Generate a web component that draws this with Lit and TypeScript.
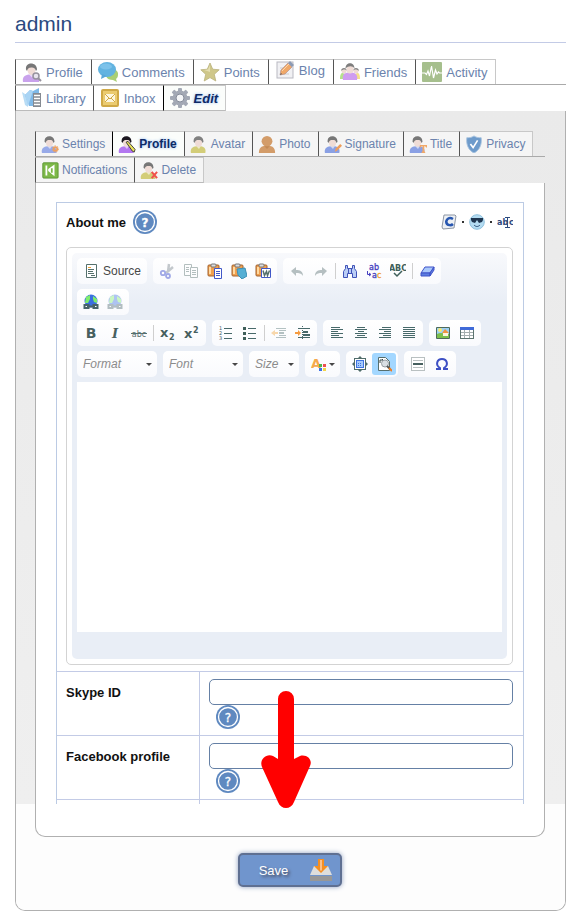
import { LitElement, html, svg, css, nothing } from "lit";
import { customElement } from "lit/decorators.js";
import { classMap } from "lit/directives/class-map.js";

const person = (hair: string, body: string, extra: unknown = nothing) => svg`
  <path d="M1 20c-1-5 2-7 6-7.500h5c4 .5 6 3 5 7.500z" fill="${body}"/>
  <path d="M7 12.500l3 3 2-3z" fill="#fff" opacity=".6"/>
  <ellipse cx="9.500" cy="8" rx="4" ry="5" fill="#f0dcd6"/>
  <path d="M4 7.500C3-.5 15-.5 15 7.500l-1 1.500c-1-3-2-3.500-4-3.500-3 0-4 .5-5 3.500z" fill="${hair}"/>
  ${extra}`;

const paste = (extra: unknown) => svg`
  <rect x="1" y="2" width="11" height="11" rx="1" fill="#f0a050" stroke="#a0602c"/>
  <path d="M3 4v7" stroke="#ffd9a0" stroke-width="2"/>
  <rect x="4" y="1" width="5" height="3" rx="1" fill="#ddd" stroke="#777"/>${extra}`;

const globe = svg`
  <circle cx="8" cy="7" r="6.500" fill="#3a6fe0"/>
  <path d="M3 3l4-2v4l-2 4H2zM10 2l4 3v4l-3-1-1-3z" fill="#7fee6a"/>
  <path d="M1.500 11h4v3h-4zM10.500 11h4v3h-4z" fill="#fff" stroke="#47636a" stroke-width="2"/>
  <path d="M4 12.500h8" stroke="#47636a" stroke-width="2"/>`;

const lines = (d: string) => svg`<path d="${d}" stroke="#47696a" stroke-width="1" shape-rendering="crispEdges"/>`;

const icons: Record<string, unknown> = {
  profile: person("#777", "#c9a2ec", svg`<circle cx="14" cy="14" r="3" fill="#e8e4ee" stroke="#96929e" stroke-width="1.500"/><path d="M16 16l3 3" stroke="#96929e" stroke-width="2"/>`),
  comments: svg`<path d="M11 8c5-3 10 1 9 5 0 2-1 3-2 4l1 3-4-2c-3 0-6-1-7-4z" fill="#a9cf74"/><ellipse cx="9" cy="7.500" rx="9" ry="7.500" fill="#62b3e0"/><path d="M4 12l-1 5 6-3z" fill="#5aa8d8"/><ellipse cx="8" cy="4.500" rx="6" ry="3" fill="#7cc2ea"/>`,
  points: svg`<path d="M10 1l2.700 6.200 6.500.6-4.900 4.500 1.500 6.700L10 15.600 4.200 19l1.500-6.700L.8 7.800l6.500-.6z" fill="#cfc78a" stroke="#b9b17c" stroke-width=".8"/><path d="M10 3v7l-6-2 4-.5z" fill="#e4deb0"/>`,
  blog: svg`<rect x="2" y="2" width="16" height="16" fill="#f1f1f4" stroke="#b9b9c2"/><path d="M5 11h3M5 14h9M5 8h3" stroke="#ccc"/><path d="M5 15l1-5 7-7 4 4-7 7z" fill="#f0a868" stroke="#a88" stroke-width=".6"/><path d="M7 11l7-7" stroke="#fbd6ae"/><path d="M13 3l4 4 2-2-4-4z" fill="#8b9bb5"/><path d="M5 15l1-2 1 1z" fill="#555"/>`,
  friends: svg`<path d="M0 17c0-6 2-7 5-5l2 5z" fill="#b6e08c"/><path d="M20 17c0-6-2-7-5-5l-2 5z" fill="#f5e08a"/><circle cx="4" cy="9" r="2.500" fill="#eedad4"/><circle cx="16" cy="9" r="2.500" fill="#eedad4"/><path d="M1 9c0-4 6-4 6 0-1-2-4-2-6 0zM13 9c0-4 6-4 6 0-2-2-5-2-6 0z" fill="#858585"/><path d="M3 18c-1-5 1-7 5-7.500h4c4 .5 6 3 5 7.500z" fill="#cf9df0"/><ellipse cx="10" cy="7" rx="3.500" ry="4.500" fill="#f0dcd6"/><path d="M5.500 6.500c0-7 9-7 9 0-2-3-6-3-9 0z" fill="#7d7d7d"/>`,
  activity: svg`<rect width="20" height="20" rx="1" fill="#a6bf8d"/><path d="M0 11h3l1.500 1.500L6 9l1.500 5L9.500 4l2 12 2-8 1.500 4 1.500-2 1 1H20" fill="none" stroke="#fff" stroke-width="1.200"/>`,
  library: svg`<path d="M0 4l6 4v11L3 17z" fill="#b8dcf5"/><path d="M3 7l5-5 3 1 6-3v18H7z" fill="#7fb9e8"/><path d="M3 7l5-5 3 1-5 15z" fill="#a9d4f4"/><rect x="11" y="5" width="8" height="14" fill="#858a92"/><path d="M12 7.500h6M12 10.500h6M12 13.500h6M12 16.500h6" stroke="#fff" stroke-width="1.500"/>`,
  inbox: svg`<rect x="2" y="2" width="16" height="16" rx="1" fill="#ebcb70" stroke="#d0a946" stroke-width="2"/><rect x="5" y="6" width="10" height="8" fill="#fdf6df"/><path d="M5 6l5 5 5-5M5 14l4-4M15 14l-4-4" fill="none" stroke="#d0a946"/>`,
  edit: svg`<g fill="#a3a9b5"><rect x="8" width="4" height="20" rx="1"/><rect y="8" width="20" height="4" rx="1"/><rect x="8" width="4" height="20" rx="1" transform="rotate(45 10 10)"/><rect x="8" width="4" height="20" rx="1" transform="rotate(135 10 10)"/><circle cx="10" cy="10" r="7.500"/></g><circle cx="10" cy="10" r="4" fill="#f4f6f8" stroke="#858c9a"/>`,
  settings: person("#777", "#98aae8", svg`<circle cx="16" cy="15.500" r="2" fill="none" stroke="#eda060" stroke-width="2"/><circle cx="16" cy="15.500" r="3.500" fill="none" stroke="#eda060" stroke-dasharray="1.500 1.500"/>`),
  subprofile: person("#1c1720", "#b377f0", svg`<path d="M9 8l2-1 8 9-1 3-2-1z" fill="#e6e05a" stroke="#333"/>`),
  avatar: person("#808080", "#d3cd78"),
  photo: svg`<path d="M1 20c0-5 2-7 6-8h6c4 1 6 3 6 8z" fill="#d39c69"/><ellipse cx="10" cy="7" rx="6" ry="6" fill="#d39c69"/><path d="M7 12.500h6l-3 3z" fill="#c38a56"/>`,
  signature: person("#777", "#8aa0e4", svg`<path d="M12 19l1-4 5-5 2 2-5 5z" fill="#ee9d5c"/>`),
  title: person("#777", "#8aa0e4", svg`<path d="M12 11h8v3h-1l-1-1.500h-1V18l1 1v1h-4v-1l1-1v-5.500h-1L13 14h-1z" fill="#f0a868"/>`),
  privacy: svg`<path d="M10 1c3 2 5 2 8 2 1 8-2 14-8 17C4 17 1 11 2 3c3 0 5 0 8-2z" fill="#6e9bcb" stroke="#a9c4e0"/><path d="M6 10l3 4 5-8" fill="none" stroke="#fff" stroke-width="1.800"/>`,
  notifications: svg`<rect x="2" y="2" width="17" height="17" rx="1" fill="#7db848" stroke="#5a9432"/><path d="M5 5h2v11H5zM8 9l7-5v13l-7-6z" fill="#fff"/><path d="M11 8h2v5h-2z" fill="#7db848"/>`,
  remove: person("#777", "#d3cd78", svg`<path d="M13 12l6 7M19 12l-6 7" stroke="#f0524c" stroke-width="2.200"/>`),

  source: svg`<path d="M3.500 1.500h10v13h-10z" fill="#fff" stroke="#55706c"/><path d="M5 4.500h3" stroke="#f0a030"/><path d="M5 6.500h6M5 8.500h5M5 10.500h6M8 12.500h4" stroke="#55706c"/>`,
  cut: svg`<g opacity=".5"><path d="M10 1l-1 8M14 4L7 10" stroke="#8a949c" stroke-width="2.500"/><circle cx="4" cy="10" r="2.200" fill="#fff" stroke="#4858d0" stroke-width="1.800"/><circle cx="9" cy="13" r="2" fill="#fff" stroke="#4858d0" stroke-width="1.800"/></g>`,
  copy: svg`<g opacity=".4" stroke="#46625f"><path d="M1.500 1.500h7v11h-7z" fill="#fff"/><path d="M3 4.500h3M3 6.500h3M3 8.500h3"/><path d="M7.500 4.500h7v10h-7z" fill="#fff"/><path d="M9 7.500h4M9 9.500h4M9 11.500h4"/></g>`,
  paste: paste(svg`<path d="M7.500 5.500h7v10h-7z" fill="#fff" stroke="#4158c8"/><path d="M9 8.500h4M9 10.500h4M9 12.500h4" stroke="#4158c8"/>`),
  pasteText: paste(svg`<path d="M6 6l8-1 2 8-5 3-4-4z" fill="#55afd4" stroke="#3c8fb4"/>`),
  pasteWord: paste(svg`<path d="M6.500 5.500h9v9h-9z" fill="#fff" stroke="#4158c8"/><path d="M8 7.500l1.500 5 2-4 1 4 2-5" fill="none" stroke="#55706c" stroke-width="1.500"/>`),
  undo: svg`<path d="M2 8l5-4v3c4 0 7 1 7 6-2-3-4-3-7-3v3z" fill="#b5bfc1"/>`,
  redo: svg`<path d="M14 8L9 4v3c-4 0-7 1-7 6 2-3 4-3 7-3v3z" fill="#b5bfc1"/>`,
  find: svg`<path d="M3.500 2.500h2v3h5v-3h2v3l2 3v6h-4v-4h-5v4h-4v-6l2-3z" fill="#b9cdf6" stroke="#3f52b8"/><path d="M6.500 5v6M9.500 5v6" stroke="#3f52b8"/>`,
  replace: svg`<g font-family="DejaVu Sans" font-size="8" fill="#453fc0" stroke="#453fc0" stroke-width=".3"><text x="3" y="7">ab</text><text x="6" y="15">a<tspan fill="#f0a030" stroke="#f0a030">c</tspan></text></g><path d="M1.500 8v3.500h3M3 10l2 1.500L3 13" fill="none" stroke="#453fc0"/>`,
  spell: svg`<text x="8" y="8" text-anchor="middle" font-family="DejaVu Sans" font-weight="bold" font-size="8" fill="#3f5f5a">ABC</text><path d="M4 10l3 3 5-5" fill="none" stroke="#3f5f5a" stroke-width="1.500"/>`,
  eraser: svg`<path d="M6 4h9l-4 6H2z" fill="#a9c8fb" stroke="#3f52c8"/><path d="M2 10h9v3H2zM11 10l4-6v3l-4 6z" fill="#5c7ee0" stroke="#3f52c8"/>`,
  link: globe,
  unlink: svg`<g opacity=".4">${globe}</g>`,
  bold: svg`<text x="8" y="13" text-anchor="middle" font-family="DejaVu Sans" font-weight="bold" font-size="14" fill="#47605f">B</text>`,
  italic: svg`<text x="8" y="13" text-anchor="middle" font-family="DejaVu Serif" font-style="italic" font-weight="bold" font-size="13" fill="#47605f">I</text>`,
  strike: svg`<text x="8" y="12" text-anchor="middle" font-family="DejaVu Sans" font-size="8" fill="#566f6e">abc</text><path d="M0 8.500h16" stroke="#566f6e"/>`,
  sub: svg`<g font-family="DejaVu Sans" font-weight="bold" fill="#47605f"><text x="0" y="12" font-size="13">x</text><text x="9" y="15" font-size="8">2</text></g>`,
  sup: svg`<g font-family="DejaVu Sans" font-weight="bold" fill="#47605f"><text x="0" y="13" font-size="13">x</text><text x="9" y="8" font-size="8">2</text></g>`,
  numbered: svg`<g font-family="DejaVu Sans" font-size="5" fill="#47605f"><text x="1" y="5">1</text><text x="1" y="10">2</text><text x="1" y="15">3</text></g>${lines("M6 3.500h8M6 8.500h8M6 13.500h8")}`,
  bullets: svg`<path d="M1 2h3v3H1zM1 7h3v3H1zM1 12h3v3H1z" fill="#3f5f5a"/>${lines("M6 3.500h8M6 8.500h8M6 13.500h8")}`,
  outdent: svg`<g opacity=".4">${lines("M5 3.500h10M8 5.500h7M8 7.500h5M8 8.500h5M8 10.500h7M5 12.500h10")}<path d="M0 8l4-3v2h3v2H4v2z" fill="#f0a030"/></g>`,
  indent: svg`${lines("M3 3.500h12M8 6.500h5M8 7.500h5M8 9.500h7M8 10.500h7M3 12.500h12")}<path d="M6 8L3 5v2H0v2h3v2z" fill="#f59b40"/><path d="M7.500 1v14" stroke="#47696a" stroke-dasharray="1 1"/>`,
  left: lines("M2 2.500h9M2 4.500h12M2 6.500h7M2 8.500h12M2 10.500h8M2 12.500h12"),
  center: lines("M4 2.500h8M2 4.500h12M5 6.500h6M2 8.500h12M4 10.500h8M2 12.500h12"),
  right: lines("M5 2.500h9M2 4.500h12M7 6.500h7M2 8.500h12M6 10.500h8M2 12.500h12"),
  justify: lines("M2 2.500h12M2 4.500h12M2 6.500h12M2 8.500h12M2 10.500h12M2 12.500h12"),
  image: svg`<path d="M1.500 2.500h13v11h-13z" fill="#9bd0f5" stroke="#4e6a5a"/><path d="M2 9c4-2 8 0 12 0v4H2z" fill="#7cbf4b"/><circle cx="5" cy="5" r="2" fill="#f7ea70"/><path d="M8 8h5v3H8z" fill="#fff3dc"/><path d="M7 8l3-4 4 4z" fill="#ef9440"/>`,
  table: svg`<g shape-rendering="crispEdges"><path d="M1.500 2.500h13v11h-13z" fill="#fff" stroke="#5c7470"/><path d="M1 2h14v3H1z" fill="#3f6ad8"/><path d="M5.500 5v8M10.500 5v8M2 7.500h12M2 10.500h12" stroke="#a5afb0"/></g>`,
  color: svg`<text x="0" y="12" font-family="DejaVu Sans" font-weight="bold" font-size="13" fill="#f5a94c">A</text><path d="M8 8h3v3H8z" fill="#50b84a"/><path d="M12 8h3v3h-3z" fill="#ee5050"/><path d="M8 12h3v3H8z" fill="#3b70e8"/><path d="M12 12h3v3h-3z" fill="#f3d548"/>`,
  maximize: svg`<path d="M8 0l3 3H5zM8 16l3-3H5zM0 8l3-3v6zM16 8l-3-3v6z" fill="#506c6a"/><rect x="2.500" y="2.500" width="11" height="11" fill="#fff" stroke="#506c6a"/><rect x="4.500" y="4.500" width="7" height="7" fill="#a5cafc" stroke="#3f74e0"/><path d="M6 7.500h4M6 9.500h4" stroke="#3f74e0" stroke-dasharray="1 1"/>`,
  preview: svg`<path d="M2.500 1.500h7l4 4v9h-11z" fill="#fff" stroke="#566f6e"/><path d="M4 7V4h3v1M6 3l2 2-2 2" fill="none" stroke="#2f4545"/><circle cx="9" cy="7.500" r="3.500" fill="#d9dfe4" stroke="#969da3"/><path d="M11 10l3 3" stroke="#555" stroke-width="2"/><path d="M13 12l3 3" stroke="#ee7c20" stroke-width="2"/>`,
  rule: svg`<g shape-rendering="crispEdges" stroke="#b9c0c1"><path d="M1.500 1.500h13v13h-13z" fill="#fff"/><path d="M3 4.500h10M3 11.500h10"/><path d="M3 8h10" stroke="#47605f" stroke-width="2"/></g>`,
  omega: svg`<path d="M2 13h4v-1C1 9 3 3 8 3s7 6 2 9v1h4" fill="none" stroke="#3d4fc4" stroke-width="2"/>`,

  comcode: svg`<path d="M3 1h11l1 1-2 12-11 1L1 13z" fill="#edf0f4" stroke="#8d96a4"/><path d="M12 5c-5-3-8 2-6 5 1 1 4 2 6 0" fill="none" stroke="#2857b0" stroke-width="2.500"/>`,
  smile: svg`<circle cx="8" cy="8" r="7.300" fill="#b4dcf2" stroke="#8fc0dd"/><path d="M2 4h12v2l-1 2-3 1-2-3-2 3-3-1-1-2z" fill="#1f3650"/><path d="M5 11c2 2 4 2 6 0" fill="none" stroke="#2b4f78"/>`,
  rename: svg`<g font-family="DejaVu Sans" font-size="8" fill="#2d4a7c"><text x="0" y="11">ab</text><text x="12" y="11">c</text></g><path d="M8 3.500h5M8 13.500h5M10.500 4v9" stroke="#2d4a7c"/>`,
  help: svg`<circle cx="12" cy="12" r="12" fill="#5f89c0"/><circle cx="12" cy="12" r="9.500" fill="none" stroke="#fff" stroke-width="1.300"/><text x="12" y="16.500" text-anchor="middle" font-family="DejaVu Sans" font-size="12" fill="#fff" stroke="#fff" stroke-width=".3">?</text>`,
  save: svg`<path d="M4 7h14l4 9H0z" fill="#dededc"/><path d="M0 17h22v5H0z" fill="#979797"/><path d="M8 0h6v7h4l-7 7-7-7h4z" fill="#f58f22"/><path d="M10 1h2v10l-1 1-1-1z" fill="#fbc08a"/>`,
};

const icon = (name: string, size = 16, box = size) =>
  html`<svg width=${size} height=${size} viewBox="0 0 ${box} ${box}" aria-hidden="true">${icons[name]}</svg>`;

type Tab = { label: string; icon: string; active?: boolean; raised?: boolean };

const mainTabs: Tab[][] = [
  [
    { label: "Profile", icon: "profile" },
    { label: "Comments", icon: "comments" },
    { label: "Points", icon: "points" },
    { label: "Blog", icon: "blog", raised: true },
    { label: "Friends", icon: "friends" },
    { label: "Activity", icon: "activity" },
  ],
  [
    { label: "Library", icon: "library" },
    { label: "Inbox", icon: "inbox" },
    { label: "Edit", icon: "edit", active: true },
  ],
];

const subTabs: Tab[][] = [
  [
    { label: "Settings", icon: "settings" },
    { label: "Profile", icon: "subprofile", active: true },
    { label: "Avatar", icon: "avatar" },
    { label: "Photo", icon: "photo" },
    { label: "Signature", icon: "signature" },
    { label: "Title", icon: "title" },
    { label: "Privacy", icon: "privacy" },
  ],
  [
    { label: "Notifications", icon: "notifications" },
    { label: "Delete", icon: "remove" },
  ],
];

const base = css`
  * { box-sizing: border-box; }
  svg { display: block; flex: none; }
  button { font: inherit; margin: 0; padding: 0; border: 0; background: none; }
`;

@customElement("tab-rows")
export class TabRows extends LitElement {
  static properties = { rows: { attribute: false }, small: { type: Boolean } };
  declare rows: Tab[][];
  declare small: boolean;

  static styles = [base, css`
    :host { display: block; font-size: 13px; }
    .row { display: flex; flex-wrap: wrap; }
    .row:not(:last-child) { border-bottom: 1px solid #aaa; }
    .tab {
      display: flex; align-items: center; gap: 4px; height: 25px;
      padding: 0 8px 0 6px; border-left: 1px solid #555; border-top: 1px solid #c8c8c8;
      color: #6b83ad; text-decoration: none; background: #fff;
    }
    .tab:last-child { border-right: 1px solid #c8c8c8; }
    .row:last-child .tab { height: 26px; border-bottom: 1px solid #bbb; padding-right: 7px; }
    .tab.raised { padding-bottom: 4px; }
    .active {
      color: #0d2a66; font-weight: bold; font-style: italic; background: #fbfdfb;
      border-left-color: #000; text-shadow: 0 0 3px #8fb8f0;
    }
    .small .row { font-size: 12px; }
    .small .tab { gap: 3px; padding: 0 7px 0 5px; background: #f5f5f5; }
    .small .active { font-style: normal; background: #fbfdfb; }
  `];

  render() {
    return html`<nav class=${this.small ? "small" : "large"}>
      ${this.rows.map((row) => html`<div class="row">
        ${row.map((t) => html`<a href="#" class=${classMap({ tab: true, active: !!t.active, raised: !!t.raised })}>
          ${icon(t.icon, this.small ? 18 : 20, 20)}<span>${t.label}</span></a>`)}
      </div>`)}
    </nav>`;
  }
}

type Item = { icon?: string; label?: string; text?: string; sep?: boolean; on?: boolean; select?: "wide" | "narrow"; drop?: boolean };
const b = (name: string, label: string): Item => ({ icon: name, label });
const sep: Item = { sep: true };

const toolbar: Item[][][] = [
  [
    [{ icon: "source", label: "Source", text: "Source" }],
    [b("cut", "Cut"), b("copy", "Copy"), b("paste", "Paste"), b("pasteText", "Paste as plain text"), b("pasteWord", "Paste from Word")],
    [b("undo", "Undo"), b("redo", "Redo"), sep, b("find", "Find"), b("replace", "Replace"), b("spell", "Check spelling"), sep, b("eraser", "Remove format")],
  ],
  [[b("link", "Link"), b("unlink", "Unlink")]],
  [
    [b("bold", "Bold"), b("italic", "Italic"), b("strike", "Strike through"), sep, b("sub", "Subscript"), b("sup", "Superscript")],
    [b("numbered", "Numbered list"), b("bullets", "Bulleted list"), sep, b("outdent", "Decrease indent"), b("indent", "Increase indent")],
    [b("left", "Align left"), b("center", "Center"), b("right", "Align right"), b("justify", "Justify")],
    [b("image", "Image"), b("table", "Table")],
  ],
  [
    [{ select: "wide", label: "Format" }],
    [{ select: "wide", label: "Font" }],
    [{ select: "narrow", label: "Size" }],
    [{ icon: "color", label: "Text color", drop: true }],
    [b("maximize", "Maximize"), { icon: "preview", label: "Show blocks", on: true }],
    [b("rule", "Horizontal line"), b("omega", "Special character")],
  ],
];

@customElement("rich-editor")
export class RichEditor extends LitElement {
  static styles = [base, css`
    :host { display: block; border: 1px solid #d3d3d3; border-radius: 5px; padding: 5px; }
    .inner {
      border-radius: 5px; padding: 5px 5px 27px;
      background: linear-gradient(#f8f9fc, #e9eef6 50px);
    }
    .tools { display: flex; flex-direction: column; gap: 5px; padding-bottom: 5px; }
    .row { display: flex; flex-wrap: wrap; gap: 5px 6px; }
    .group {
      display: flex; align-items: center; height: 26px; padding: 0 2px;
      border-radius: 5px; background: linear-gradient(#fff, #f9fafd);
    }
    .tool { display: flex; align-items: center; height: 22px; padding: 0 4px; border-radius: 3px; }
    .on { background: #a3d7ff; }
    .label { padding-left: 4px; font-size: 12px; color: #474747; }
    .sep { width: 1px; height: 16px; margin: 0 2px; background: #cfcfcf; }
    .combo { position: relative; }
    .combo::after, .drop::after {
      content: ""; border: 3px solid transparent; border-top-color: #474747; border-bottom: 0;
    }
    .combo::after { position: absolute; right: 3px; top: 12px; pointer-events: none; }
    .drop { padding-right: 3px; gap: 2px; }
    select {
      display: block; appearance: none; border: 0; background: none; height: 26px; padding: 0 4px;
      font: italic 12px "Liberation Sans", sans-serif; color: #8b8b8b;
    }
    .wide { width: 76px; }
    .narrow { width: 46px; }
    textarea { display: block; width: 100%; height: 250px; border: 0; resize: none; background: #fff; }
  `];

  item(i: Item) {
    if (i.sep) return html`<span class="sep"></span>`;
    if (i.select) return html`<span class="combo"><select class=${i.select} aria-label=${i.label}><option>${i.label}</option></select></span>`;
    return html`<button type="button" class=${classMap({ tool: true, on: !!i.on, drop: !!i.drop })} aria-label=${i.label}>
      ${icon(i.icon!)}${i.text ? html`<span class="label">${i.text}</span>` : nothing}</button>`;
  }

  render() {
    return html`<div class="inner">
      <div class="tools">
        ${toolbar.map((row) => html`<div class="row">
          ${row.map((g) => html`<div class="group">${g.map((i) => this.item(i))}</div>`)}</div>`)}
      </div>
      <textarea aria-label="About me"></textarea>
    </div>`;
  }
}

@customElement("app-root")
export class AppRoot extends LitElement {
  static styles = [base, css`
    :host {
      display: block; padding: 12px 13px 12px 15px; background: #fff; color: #111;
      font: 13px "Liberation Sans", Arial, sans-serif;
    }
    h1 {
      margin: 0 0 16px; height: 31px; border-bottom: 1px solid #c3cbe6;
      font-size: 21px; line-height: 24px; font-weight: normal; color: #2b4a80;
    }
    .frame { position: relative; border: 1px solid #b0b0b0; border-top: 0; border-radius: 0 0 10px 10px; overflow: hidden; }
    .upper { padding: 20px 20px 0 19px; background: linear-gradient(#eaeaea, #efefef); }
    .panel { padding: 19px 20px 0; background: #fff; border: solid #b0b0b0; border-width: 0 1px; }
    .fields { border: 1px solid #bccbe4; border-bottom: 0; }
    .about { padding: 7px 10px 6px 9px; }
    .head { display: flex; align-items: center; height: 24px; gap: 7px; margin-bottom: 13px; font-weight: bold; }
    .name { font-weight: bold; }
    .extras { display: flex; align-items: center; gap: 5px; margin-left: auto; }
    .dot { width: 2px; height: 2px; background: #333; }
    .field { display: grid; grid-template-columns: 143px 1fr; height: 64px; border-top: 1px solid #c3cbe6; }
    .name { padding: 13px 9px; border-right: 1px solid #c3cbe6; }
    .value { padding: 7px 10px 0 9px; }
    .help { display: block; border-radius: 12px; }
    .value .help { margin-left: 7px; }
    input { display: block; width: 100%; height: 26px; border: 1px solid #6580a5; border-radius: 5px; background: #fff; }
    .more { display: grid; grid-template-columns: 143px 1fr; height: 5px; border-top: 1px solid #c3cbe6; }
    .more span { border-right: 1px solid #c3cbe6; }
    .lower { padding: 0 20px 23px 19px; background: #fdfdfd; display: flex; flex-direction: column; align-items: center; gap: 16px; }
    .foot { width: 100%; height: 33px; background: #fff; border: 1px solid #b0b0b0; border-top: 0; border-radius: 0 0 10px 10px; }
    .save {
      display: flex; align-items: center; gap: 22px; height: 34px; padding: 0 8px 0 19px;
      border: 2px solid #5f7092; border-radius: 5px; background: #7095cd; color: #fff;
      text-shadow: 2px 2px 3px #445; box-shadow: 0 0 5px #8e9fc0;
    }
    .arrow { position: absolute; left: 245px; bottom: 101px; pointer-events: none; }
  `];

  help = () => html`<button type="button" class="help" aria-label="Help">${icon("help", 24)}</button>`;

  field(id: string, label: string) {
    return html`<div class="field">
      <label class="name" for=${id}>${label}</label>
      <div class="value"><input id=${id} type="text" />${this.help()}</div>
    </div>`;
  }

  render() {
    return html`
      <h1>admin</h1>
      <tab-rows .rows=${mainTabs}></tab-rows>
      <main class="frame">
        <div class="upper">
          <tab-rows small .rows=${subTabs}></tab-rows>
          <div class="panel">
            <div class="fields">
              <div class="about">
                <div class="head">
                  <span>About me</span>${this.help()}
                  <div class="extras">
                    <button type="button" aria-label="Comcode">${icon("comcode")}</button><span class="dot"></span>
                    <button type="button" aria-label="Emoticons">${icon("smile")}</button><span class="dot"></span>
                    <button type="button" aria-label="Toggle editor">${icon("rename")}</button>
                  </div>
                </div>
                <rich-editor></rich-editor>
              </div>
              ${this.field("skype", "Skype ID")}
              ${this.field("facebook", "Facebook profile")}
              <div class="more"><span></span></div>
            </div>
          </div>
        </div>
        <div class="lower">
          <div class="foot"></div>
          <button type="submit" class="save"><span>Save</span>${icon("save", 22)}</button>
        </div>
        <svg class="arrow" width="50" height="118" viewBox="0 0 50 118" aria-hidden="true">
          <path d="M17 8a8 8 0 0 1 16 0v60l6-3c7-2 13 4 10 10L33 111c-3 8-13 8-16 0L1 76c-3-7 4-14 11-11l5 3z" fill="#f00"/>
        </svg>
      </main>`;
  }
}
